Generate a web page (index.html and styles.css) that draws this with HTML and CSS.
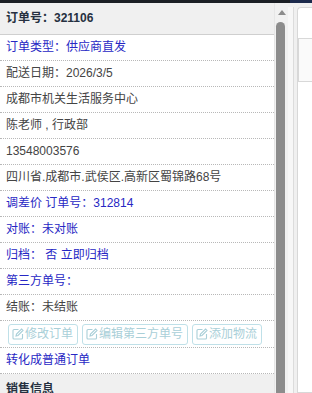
FILE: index.html
```html
<!DOCTYPE html>
<html>
<head>
<meta charset="utf-8">
<title>订单详情</title>
<link rel="stylesheet" href="styles.css">
</head>
<body>
<div class="topbar"><div class="topbar-dark"></div><div class="topbar-blue"></div></div>
<div class="main">
  <div class="panel">
    <div class="hd">订单号：321106</div>
    <div class="row blue">订单类型：供应商直发</div>
    <div class="row">配送日期：2026/3/5</div>
    <div class="row">成都市机关生活服务中心</div>
    <div class="row">陈老师 , 行政部</div>
    <div class="row">13548003576</div>
    <div class="row">四川省.成都市.武侯区.高新区蜀锦路68号</div>
    <div class="row blue">调差价 订单号：312814</div>
    <div class="row blue">对账：未对账</div>
    <div class="row blue">归档： 否 立即归档</div>
    <div class="row blue">第三方单号：</div>
    <div class="row">结账：未结账</div>
    <div class="row btns">
      <span class="btn"><svg viewBox="0 0 12 12"><path d="M6.5 1.5H2a1 1 0 0 0-1 1V10a1 1 0 0 0 1 1h7.5a1 1 0 0 0 1-1V6"/><path d="M9.5 1l1.5 1.5L6 7.5 4 8l.5-2z"/></svg>修改订单</span>
      <span class="btn"><svg viewBox="0 0 12 12"><path d="M6.5 1.5H2a1 1 0 0 0-1 1V10a1 1 0 0 0 1 1h7.5a1 1 0 0 0 1-1V6"/><path d="M9.5 1l1.5 1.5L6 7.5 4 8l.5-2z"/></svg>编辑第三方单号</span>
      <span class="btn"><svg viewBox="0 0 12 12"><path d="M6.5 1.5H2a1 1 0 0 0-1 1V10a1 1 0 0 0 1 1h7.5a1 1 0 0 0 1-1V6"/><path d="M9.5 1l1.5 1.5L6 7.5 4 8l.5-2z"/></svg>添加物流</span>
    </div>
    <div class="row blue">转化成普通订单</div>
    <div class="hd">销售信息</div>
  </div>
  <div class="scroll">
    <div class="arrow"></div>
    <div class="thumb"></div>
  </div>
  <div class="side">
    <div class="side-line"></div>
    <div class="side-card"><div class="side-box"></div></div>
  </div>
</div>
</body>
</html>
```

FILE: styles.css
```css
body {
  margin: 0;
  font-family: "Liberation Sans", "Noto Sans CJK SC", sans-serif;
  font-size: 12px;
  color: #444;
  background: #fff;
  overflow: hidden;
}

.topbar {
  display: flex;
  height: 3px;
}
.topbar-dark {
  width: 290px;
  background: #1b1f25;
}
.topbar-blue {
  flex: 1;
  background: #1c2a4c;
}

.main {
  display: flex;
  height: 390px;
}

.panel {
  width: 274px;
  overflow: hidden;
  border-right: 1px solid #e6e6e6;
}

.hd {
  height: 31px;
  line-height: 31px;
  padding-left: 6px;
  background: #f0f0f0;
  border-bottom: 1px solid #cfcfcf;
  font-weight: bold;
  color: #263040;
}

.row {
  height: 25px;
  line-height: 25px;
  padding-left: 6px;
  border-bottom: 1px dotted #b8b8b8;
  white-space: nowrap;
}
.blue {
  color: #2727c4;
}

.btns {
  display: flex;
  align-items: center;
  gap: 4px;
  padding-left: 8px;
  height: 26px;
}
.btn {
  display: flex;
  align-items: center;
  height: 19px;
  line-height: 19px;
  padding: 0 4px 0 3px;
  border: 1px solid #bfe0e8;
  border-radius: 3px;
  color: #a9cfd8;
}
.btn svg {
  width: 12px;
  height: 12px;
  margin-right: 1px;
  fill: none;
  stroke: #a9cfd8;
  stroke-width: 1.1;
}

.scroll {
  width: 13px;
  background: #f1f1f1;
  position: relative;
}
.arrow {
  margin: 7px auto 0;
  width: 0;
  height: 0;
  border-left: 4px solid transparent;
  border-right: 4px solid transparent;
  border-bottom: 5px solid #8c8c8c;
}
.thumb {
  margin: 7px 0 0 1px;
  width: 9px;
  height: 380px;
  background: #8c8c8c;
  border-radius: 5px 5px 0 0;
}

.side {
  flex: 1;
  display: flex;
  background: #f0f0f0;
  padding-top: 4px;
}
.side-line {
  width: 5px;
  border-right: 1px solid #dcdcdc;
  background: #f7f7f7;
}
.side-card {
  flex: 1;
  margin-left: 3px;
  background: #fff;
  border: 1px solid #d8d8d8;
  border-right: none;
  border-radius: 4px 0 0 0;
  padding-top: 30px;
}
.side-box {
  height: 42px;
  border: 1px solid #d8d8d8;
  border-right: none;
  background: #fafafa;
}
```
